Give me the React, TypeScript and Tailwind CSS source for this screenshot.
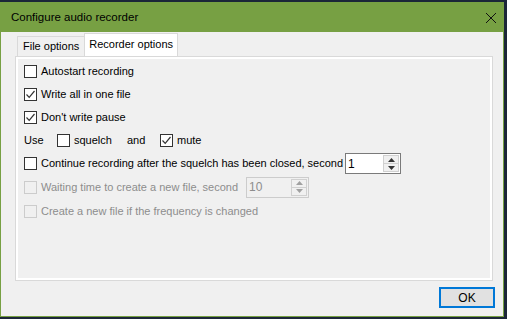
import React from "react";

const font = { fontFamily: '"Liberation Sans", Arial, sans-serif' };

function Check({ checked = false, disabled = false }: { checked?: boolean; disabled?: boolean }) {
  return (
    <span
      className={
        "inline-flex h-[13px] w-[13px] shrink-0 items-center justify-center border " +
        (disabled ? "border-[#cccccc] bg-[#f0f0f0]" : "border-[#333333] bg-white")
      }
    >
      {checked && (
        <svg width="11" height="11" viewBox="0 0 11 11">
          <path d="M1.5 5.5 L4.2 8.3 L9.5 2" fill="none" stroke="#333" strokeWidth="1.2" />
        </svg>
      )}
    </span>
  );
}

function Spin({ value, disabled = false, w }: { value: string; disabled?: boolean; w: string }) {
  return (
    <div
      className={
        "flex h-[21px] items-center border " +
        w +
        (disabled ? " border-[#cccccc] bg-[#f0f0f0] text-[#8d8d8d]" : " border-[#7a7a7a] bg-white text-black")
      }
    >
      <span className="flex-1 pl-[2px] text-[12px] leading-none">{value}</span>
      <div className="mr-[1px] flex h-[17px] w-[16px] flex-col border border-[#d0d0d0] bg-[#f0f0f0]">
        <div className="flex flex-1 items-center justify-center border-b border-[#d0d0d0]">
          <svg width="7" height="4" viewBox="0 0 7 4">
            <path d="M0 4 L3.5 0 L7 4 Z" fill={disabled ? "#a0a0a0" : "#333"} />
          </svg>
        </div>
        <div className="flex flex-1 items-center justify-center">
          <svg width="7" height="4" viewBox="0 0 7 4">
            <path d="M0 0 L3.5 4 L7 0 Z" fill={disabled ? "#a0a0a0" : "#333"} />
          </svg>
        </div>
      </div>
    </div>
  );
}

function Row({ children }: { children: React.ReactNode }) {
  return <div className="flex h-[23px] items-center">{children}</div>;
}

export default function App() {
  return (
    <div className="h-[319px] w-[507px] overflow-hidden bg-[#1b2638] pt-[2px]" style={font}>
      <div className="flex h-[315px] w-[504px] flex-col border border-[#77a043] bg-[#f0f0f0] text-[11px] text-black">
        <div className="flex h-[29px] shrink-0 items-center justify-between bg-[#77a043] pl-[10px] pr-[5px]">
          <span className="text-[11.5px]">Configure audio recorder</span>
          <svg width="12" height="12" viewBox="0 0 12 12" className="mr-[1px]">
            <path d="M1 1 L11 11 M11 1 L1 11" stroke="#111" strokeWidth="1" />
          </svg>
        </div>

        <div className="flex flex-1 flex-col pl-[14px] pr-[10px] pt-[1px]">
          <div className="flex h-[23px] items-end pl-[2px]">
            <div className="flex h-[20px] items-center border border-b-0 border-[#d9d9d9] bg-[#f0f0f0] px-[5px]">
              File options
            </div>
            <div className="-ml-[1px] flex h-[23px] items-center border border-b-0 border-[#d9d9d9] bg-white px-[4px] pb-[2px]">
              Recorder options
            </div>
          </div>

          <div className="h-[225px] border border-[#d9d9d9] bg-white p-[2px]">
            <div className="h-full bg-[#f0f0f0] pl-[6px] pt-[1px]">
              <Row>
                <Check />
                <span className="ml-[4px]">Autostart recording</span>
              </Row>
              <Row>
                <Check checked />
                <span className="ml-[4px]">Write all in one file</span>
              </Row>
              <Row>
                <Check checked />
                <span className="ml-[4px]">Don't write pause</span>
              </Row>
              <Row>
                <span className="w-[33px]">Use</span>
                <Check />
                <span className="ml-[4px] w-[53px]">squelch</span>
                <span className="w-[33px]">and</span>
                <Check checked />
                <span className="ml-[4px]">mute</span>
              </Row>
              <Row>
                <Check />
                <span className="ml-[4px] mr-[2px]">Continue recording after the squelch has been closed, second</span>
                <Spin value="1" w="w-[56px]" />
              </Row>
              <div className="flex h-[24px] items-center">
                <Check disabled />
                <span className="ml-[4px] mr-[8px] text-[#8d8d8d]">Waiting time to create a new file, second</span>
                <Spin value="10" disabled w="w-[63px]" />
              </div>
              <div className="flex h-[24px] items-center">
                <Check disabled />
                <span className="ml-[4px] text-[#8d8d8d]">Create a new file if the frequency is changed</span>
              </div>
            </div>
          </div>

          <div className="flex justify-end pt-[6px]">
            <button className="-mr-[2px] flex h-[21px] w-[56px] items-center justify-center border-2 border-[#0078d7] bg-[#e1e1e1] text-[12px]">
              OK
            </button>
          </div>
        </div>
      </div>
    </div>
  );
}
